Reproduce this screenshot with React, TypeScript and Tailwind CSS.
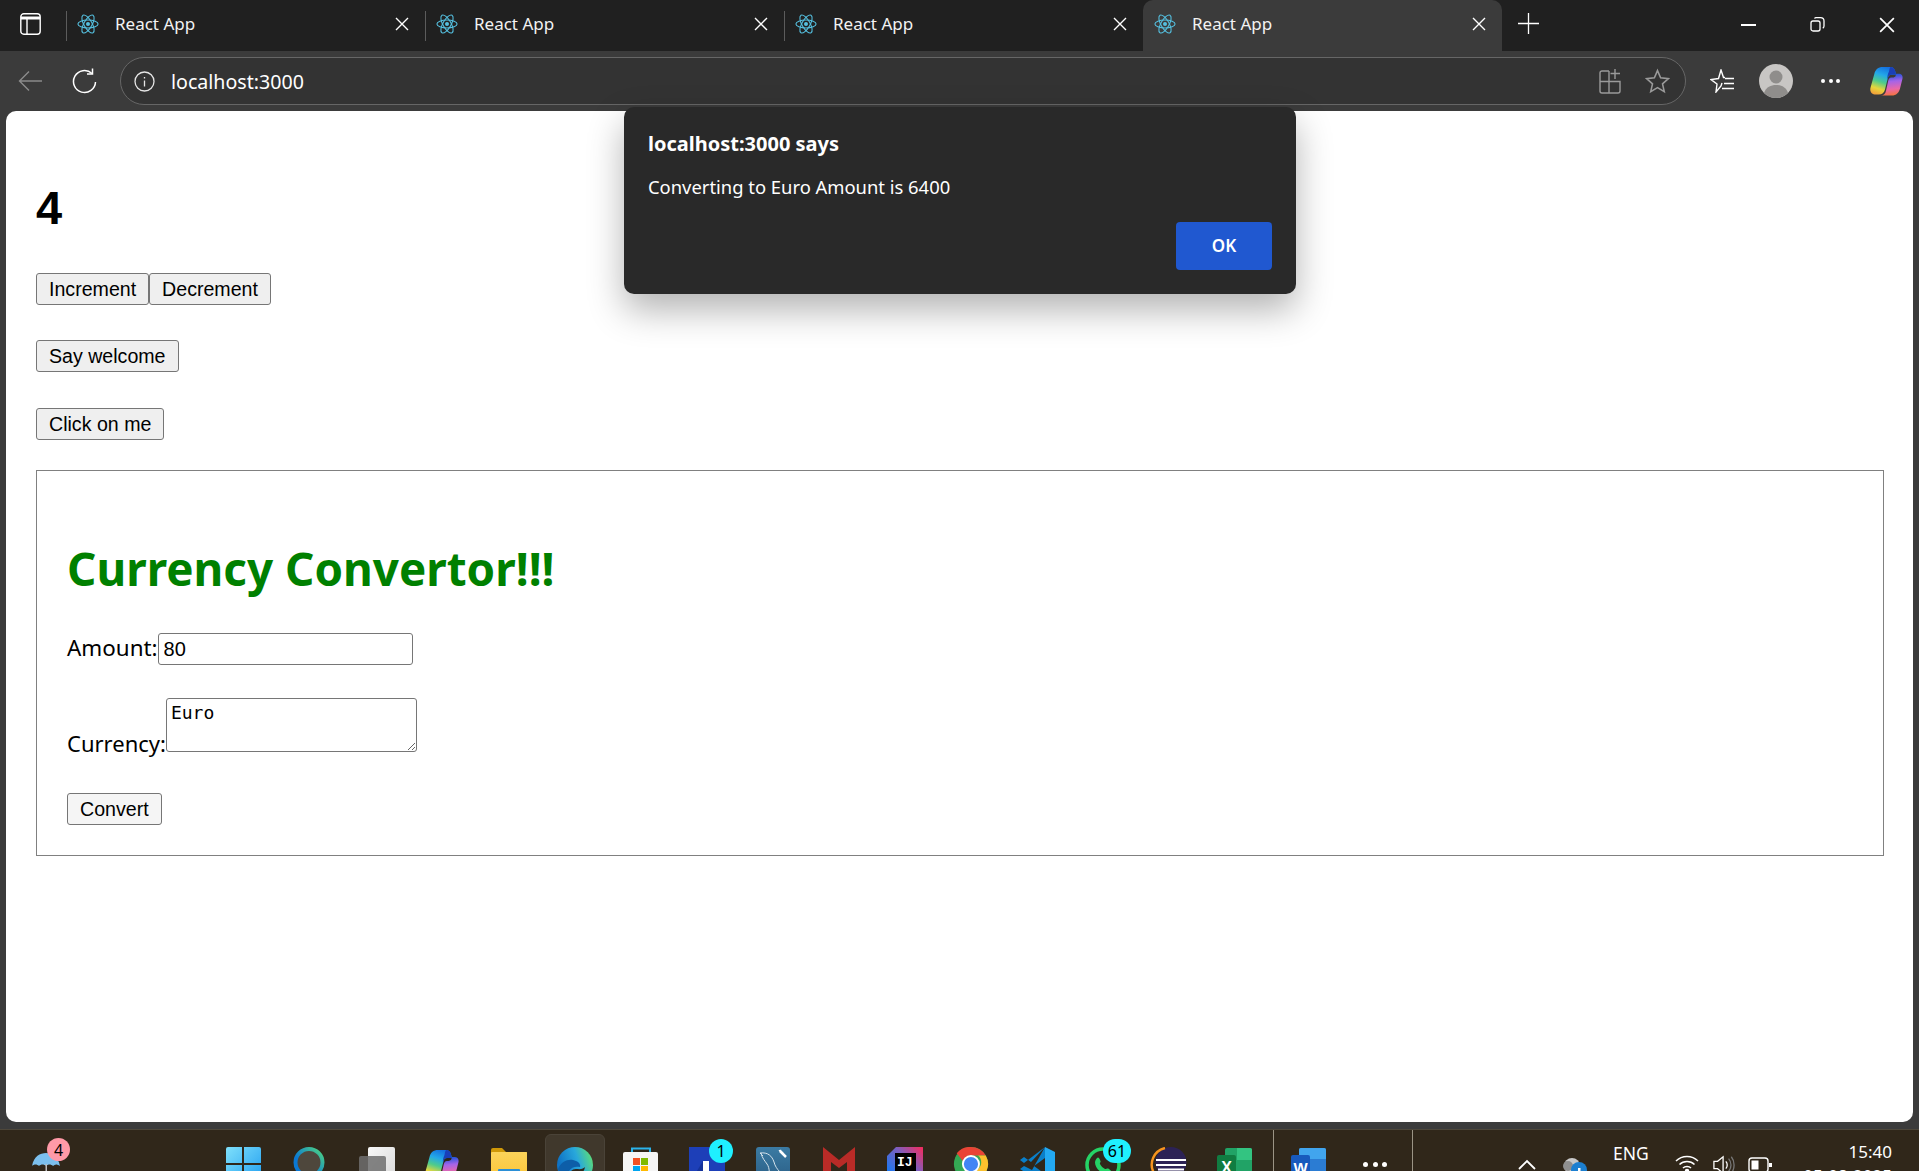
import React from "react";

const ui = { fontFamily: '"Noto Sans", "Open Sans", sans-serif' };
const arial = { fontFamily: '"Liberation Sans", Arial, sans-serif' };

function Atom() {
  return (
    <svg width="22" height="24" viewBox="-12 -12 24 24" fill="none" stroke="#55c0e0" strokeWidth="1.2">
      <circle r="2.2" fill="#55c0e0" stroke="none" />
      <ellipse rx="11" ry="4.4" />
      <ellipse rx="11" ry="4.4" transform="rotate(60)" />
      <ellipse rx="11" ry="4.4" transform="rotate(120)" />
    </svg>
  );
}

function X({ s = 14, w = 1.4 }: { s?: number; w?: number }) {
  return (
    <svg width={s} height={s} viewBox="0 0 14 14" stroke="#fff" strokeWidth={w} fill="none">
      <path d="M1 1l12 12M13 1L1 13" />
    </svg>
  );
}

function Tab({ active }: { active?: boolean }) {
  return (
    <div className={active ? "relative flex h-[51px] w-[359px] items-center rounded-t-[10px] bg-[#3b3b3b] pb-[3px]" : "relative flex h-[51px] w-[359px] items-center pb-[3px]"}>
      {!active && <div className="absolute left-0 top-[11px] h-[30px] w-px bg-[#5c5c5c]" />}
      <div className="ml-[11px] flex w-[22px] justify-center"><Atom /></div>
      <span className="ml-[16px] text-[17px] text-[#f2f2f2]" style={ui}>React App</span>
      <div className="ml-auto mr-[16px]"><X /></div>
    </div>
  );
}

function CopilotLogo({ s = 33 }: { s?: number }) {
  return (
    <svg width={s} height={s} viewBox="0 0 34 32">
      <defs>
        <linearGradient id="cpa" x1="0.6" y1="0" x2="0.3" y2="1">
          <stop offset="0" stopColor="#1470e0" />
          <stop offset="0.3" stopColor="#23a8e8" />
          <stop offset="0.55" stopColor="#4ecb8c" />
          <stop offset="0.8" stopColor="#e6d63c" />
          <stop offset="1" stopColor="#f2a33a" />
        </linearGradient>
        <linearGradient id="cpb" x1="0.45" y1="0" x2="0.55" y2="1">
          <stop offset="0" stopColor="#1452d8" />
          <stop offset="0.35" stopColor="#a564e8" />
          <stop offset="0.7" stopColor="#ea68a8" />
          <stop offset="1" stopColor="#f5743c" />
        </linearGradient>
      </defs>
      <path d="M22 12c2 0 3-.5 4-1l1-3h2.500c3 0 4.500 2 4 5l-2.500 10c-1 4.500-4 7.500-8.500 7.500H11c3 0 5-2 5.500-5l2-9c.3-2.500 1.500-4.500 3.500-4.500z" fill="url(#cpb)" />
      <path d="M13 1h8c3 0 4.500 2 5 4.500l1 3.500h-5c-2 0-3 1-3.500 3l-3 12c-.8 3.500-3 5.500-6.500 5.500H6c-4 0-6.500-3-5.500-7L4.500 8C5.500 3.500 8.500 1 13 1z" fill="url(#cpa)" />
      <path d="M21 1c2.500 0 4.500 1.500 5 4.500l1 3.500h-5c-2 0-3 1-3.500 3l-.5 2c-.5-3 .5-6 1.500-8 .5-2 .5-4 1.500-5z" fill="#1a3fb8" />
    </svg>
  );
}

function Avatar() {
  return (
    <svg width="34" height="34" viewBox="0 0 34 34">
      <circle cx="17" cy="17" r="17" fill="#c8c6c4" />
      <circle cx="17" cy="13" r="6.500" fill="#8f8d8b" />
      <path d="M5 29c2-6 7-8 12-8s10 2 12 8c-3 3-7 5-12 5s-9-2-12-5z" fill="#8f8d8b" />
    </svg>
  );
}

function TabBar() {
  return (
    <div className="flex h-[51px] shrink-0 items-center bg-[#202020]">
      <div className="mb-[4px] ml-[20px] w-[46px] shrink-0">
        <svg width="21" height="22" viewBox="0 0 21 22" fill="none" stroke="#fff" strokeWidth="1.4" className="block">
          <rect x="0.800" y="0.800" width="19.400" height="20.400" rx="3" />
          <path d="M1 5h19" strokeWidth="3" />
          <path d="M7 6v15" />
        </svg>
      </div>
      <Tab />
      <Tab />
      <Tab />
      <Tab active />
      <div className="mb-[4px] ml-[16px]">
        <svg width="21" height="21" viewBox="0 0 21 21" stroke="#fff" strokeWidth="1.300" className="block"><path d="M10.500 0v21M0 10.500h21" /></svg>
      </div>
      <div className="mb-[2px] ml-[202px] h-[2px] w-[15px] bg-white" />
      <div className="mb-[2px] ml-[54px]">
        <svg width="15" height="15" viewBox="0 0 15 15" fill="none" stroke="#fff" strokeWidth="1.300" className="block">
          <rect x="1" y="4" width="9" height="10" rx="2" />
          <path d="M4.500 1.500c.4-.6 1-.8 1.500-.8h4.500C12.500.7 14 2 14 4v5c0 1-.5 1.800-1.200 2.300" />
        </svg>
      </div>
      <div className="mb-[2px] ml-[54px]"><X s={16} w={1.500} /></div>
    </div>
  );
}

function Toolbar() {
  return (
    <div className="flex h-[60px] shrink-0 items-center bg-[#3b3b3b]">
      <div className="ml-[18px]">
        <svg width="25" height="22" viewBox="0 0 25 22" fill="none" stroke="#8b8b8b" strokeWidth="1.400" className="block"><path d="M24 11H1.500M11 1.500L1.500 11l9.500 9.500" /></svg>
      </div>
      <div className="ml-[29px]">
        <svg width="25" height="26" viewBox="0 0 25 26" fill="none" stroke="#fff" strokeWidth="1.500" className="block">
          <path d="M20 5.500A11 11 0 1 0 23.500 14" />
          <path d="M20.500 0.500v5.500H15" />
        </svg>
      </div>
      <div className="ml-[23px] flex h-[48px] w-[1566px] items-center rounded-[24px] border border-[#666666] bg-[#333333]">
        <div className="ml-[13px]">
          <svg width="21" height="21" viewBox="0 0 21 21" fill="none" stroke="#e6e6e6" strokeWidth="1.300" className="block">
            <circle cx="10.500" cy="10.500" r="9.500" />
            <path d="M10.500 9.500v6M10.500 6v1.400" />
          </svg>
        </div>
        <span className="ml-[16px] mt-[2px] text-[19.6px] text-white" style={ui}>localhost:3000</span>
        <div className="ml-auto">
          <svg width="22" height="26" viewBox="0 0 22 26" fill="none" stroke="#9a9a9a" strokeWidth="1.400" className="block">
            <path d="M10 3H3a2 2 0 0 0-2 2v18a2 2 0 0 0 2 2h16a2 2 0 0 0 2-2V13.500H1M10 3v22M16 1v10M11.500 5.500h9.500" />
          </svg>
        </div>
        <div className="ml-[24px] mr-[15px]">
          <svg width="25" height="26" viewBox="0 0 24 24" fill="none" stroke="#9a9a9a" strokeWidth="1.500" className="block"><path d="M12 2l3 7 7.500.7-5.700 5 1.700 7.500L12 18.300l-6.500 3.900 1.700-7.500-5.700-5L9 9z" /></svg>
        </div>
      </div>
      <div className="ml-[24px]">
        <svg width="24" height="24" viewBox="0 0 24 24" fill="none" stroke="#fff" strokeWidth="1.400" className="block">
          <path d="M12 14l-1 3-5 6 1-8-6-4.500 7.500-1L11 1l2.500 7.500H15" />
          <path d="M15 9.500h9M14 14.500h10M12 19.500h12" />
        </svg>
      </div>
      <div className="ml-[25px]"><Avatar /></div>
      <div className="ml-[28px] flex w-[19px] justify-between">
        <div className="h-[4px] w-[4px] rounded-full bg-white" />
        <div className="h-[4px] w-[4px] rounded-full bg-white" />
        <div className="h-[4px] w-[4px] rounded-full bg-white" />
      </div>
      <div className="ml-[30px]"><CopilotLogo /></div>
    </div>
  );
}

const btn = "rounded-[3px] border border-[#767676] bg-[#efefef] px-[12px] h-[32px] text-[19.6px] leading-[24px] text-black";

function Page() {
  return (
    <div className="mx-[6px] flex-1 overflow-hidden rounded-[10px] bg-white pl-[30px] pr-[29px] text-black" style={arial}>
      <h1 className="mt-[75px] h-[44px] text-[47px] font-bold leading-[44px]">4</h1>
      <div className="mt-[43px] flex h-[32px]">
        <button className={btn + " w-[113px]"} style={arial}>Increment</button>
        <button className={btn + " w-[122px]"} style={arial}>Decrement</button>
      </div>
      <div className="mt-[35px] flex h-[32px]">
        <button className={btn} style={arial}>Say welcome</button>
      </div>
      <div className="mt-[36px] flex h-[32px]">
        <button className={btn} style={arial}>Click on me</button>
      </div>
      <div className="mt-[30px] h-[386px] border border-[#808080] pl-[30px]" style={ui}>
        <h2 className="mt-[65px] h-[64px] text-[45.8px] font-bold leading-[64px] text-[#008000]" style={ui}>Currency Convertor!!!</h2>
        <div className="mt-[32px] h-[32px] text-[22.4px] leading-[32px]">
          Amount:<input readOnly value="80" className="h-[32px] w-[255px] rounded-[3px] border border-[#767676] px-[5px] text-[20px] outline-none" style={arial} />
        </div>
        <div className="mt-[34px] h-[53px] whitespace-nowrap text-[22px] leading-[32px]">
          Currency:<textarea readOnly value="Euro" className="m-0 h-[54px] w-[251px] resize rounded-[3px] border border-[#767676] px-[4px] py-[3px] text-[18px] leading-[22px] outline-none" style={{ fontFamily: '"DejaVu Sans Mono", monospace' }} />
        </div>
        <div className="mt-[42px]">
          <button className={btn + " bg-[#f5f5f5]"} style={arial}>Convert</button>
        </div>
      </div>
    </div>
  );
}

function Dialog() {
  return (
    <div className="absolute left-[624px] top-[107px] h-[187px] w-[672px] rounded-[10px] bg-[#292929] px-[24px] text-white shadow-[0_16px_36px_rgba(0,0,0,0.3)]" style={ui}>
      <div className="mt-[22px] text-[20px] font-bold leading-[30px]">localhost:3000 says</div>
      <div className="mt-[13px] text-[18.4px] leading-[30px]">Converting to Euro Amount is 6400</div>
      <div className="mt-[20px] flex justify-end">
        <button className="h-[48px] w-[96px] rounded-[4px] bg-[#2058d0] text-[17px] font-semibold text-white" style={ui}>OK</button>
      </div>
    </div>
  );
}

function Badge({ n, cls }: { n: string; cls: string }) {
  return <div className={"absolute flex h-[24px] items-center justify-center rounded-full text-[16px] text-black " + cls} style={ui}>{n}</div>;
}

const Slot = ({ children }: { children: React.ReactNode }) => (
  <div className="relative h-[36px] w-[36px] shrink-0">{children}</div>
);

function Windows() {
  return (
    <svg width="36" height="36" viewBox="0 0 36 36" className="block">
      <defs><linearGradient id="win" x1="0" y1="0" x2="1" y2="1"><stop offset="0" stopColor="#7fe0fb" /><stop offset="1" stopColor="#1e9cf0" /></linearGradient></defs>
      <path d="M1 2a2 2 0 0 1 2-2h14v16H1zM19 0h15a2 2 0 0 1 2 2v14H19zM1 18h16v18H1zM19 18h17v18H19z" fill="url(#win)" />
    </svg>
  );
}
function Cortana() {
  return (
    <svg width="36" height="36" viewBox="0 0 36 36" className="block">
      <defs><linearGradient id="cort" x1="0" y1="1" x2="1" y2="0"><stop offset="0.35" stopColor="#0a78d4" /><stop offset="1" stopColor="#4fd67f" /></linearGradient></defs>
      <circle cx="18" cy="15.500" r="13.500" fill="#4e473c" stroke="url(#cort)" strokeWidth="4" />
    </svg>
  );
}
function TaskView() {
  return (
    <svg width="40" height="36" viewBox="0 0 40 36" className="block">
      <defs>
        <linearGradient id="tv" x1="0" y1="0" x2="1" y2="1"><stop offset="0" stopColor="#f8f8f8" /><stop offset="1" stopColor="#d8d8d8" /></linearGradient>
      </defs>
      <rect x="11" y="0" width="27" height="36" rx="2" fill="url(#tv)" />
      <rect x="2" y="9" width="27" height="30" rx="2" fill="#6e6e6e" fillOpacity="0.85" />
    </svg>
  );
}
function Folder() {
  return (
    <svg width="38" height="36" viewBox="0 0 38 36" className="block">
      <defs><linearGradient id="fold" x1="0" y1="0" x2="0" y2="1"><stop offset="0" stopColor="#fbd35a" /><stop offset="1" stopColor="#fcc22e" /></linearGradient></defs>
      <path d="M2 3a2 2 0 0 1 2-2h9l4 4h21v6H2z" fill="#cf9808" />
      <rect x="2" y="5" width="36" height="34" rx="1" fill="url(#fold)" />
      <rect x="9" y="22" width="22" height="14" rx="1" fill="#2b8fd6" />
    </svg>
  );
}
function Edge() {
  return (
    <svg width="38" height="36" viewBox="0 0 38 36" className="block">
      <defs>
        <linearGradient id="edg" x1="0.1" y1="0.6" x2="1" y2="0.3"><stop offset="0" stopColor="#0e72c4" /><stop offset="0.55" stopColor="#28a7dc" /><stop offset="1" stopColor="#5cdd78" /></linearGradient>
      </defs>
      <circle cx="20" cy="18" r="18" fill="url(#edg)" />
      <path d="M3 22c3-7 9-10 15-9 5 1 8 4 7 7-4-1-9 0-11 4-1 3-1 7 1 10C8 33 4 28 3 22z" fill="#0d5ea8" />
      <path d="M15 26c1-3 4-4.500 7-4 4 .5 7-.5 8-2-1 5-4 8-8 9 1 2 3 4 5 5l-8 2c-3-3-5-6-4-10z" fill="#30271a" />
    </svg>
  );
}
function Store() {
  return (
    <svg width="38" height="36" viewBox="0 0 38 36" className="block">
      <path d="M11 5V1.500h18V5" fill="none" stroke="#2bb3ea" strokeWidth="2" />
      <rect x="2" y="5" width="35" height="32" rx="2" fill="#f5f5f5" />
      <rect x="12" y="11" width="7" height="7" fill="#f25022" />
      <rect x="20" y="11" width="7" height="7" fill="#7fba00" />
      <rect x="12" y="19" width="7" height="7" fill="#00a4ef" />
      <rect x="20" y="19" width="7" height="7" fill="#ffb900" />
    </svg>
  );
}
function Learn() {
  return (
    <svg width="38" height="36" viewBox="0 0 38 36" className="block">
      <rect x="2" y="-1" width="36" height="38" fill="#1d3fb8" />
      <path d="M16 14h6v18h10v5H16z" fill="#fff" />
      <path d="M2 37L16 14v23z" fill="#15329a" />
    </svg>
  );
}
function Workbench() {
  return (
    <svg width="38" height="36" viewBox="0 0 38 36" className="block">
      <defs><linearGradient id="wb" x1="0" y1="0" x2="0" y2="1"><stop offset="0" stopColor="#3b7ba3" /><stop offset="1" stopColor="#2a5d85" /></linearGradient></defs>
      <rect x="3" width="34" height="36" rx="3" fill="url(#wb)" />
      <path d="M7 6c8-1 12 3 14 9 1 4 3 7 6 10M8 6c1 5 4 8 6 11 3 4 2 10 3 15M7 6l3 3" fill="none" stroke="#d5e3ec" strokeWidth="1" />
      <path d="M27 4l6 6" stroke="#fff" strokeWidth="2.500" fill="none" />
      <path d="M25.500 3.500c1-1 2-1 3-.5l-1.500 2 1 1 2-1.500c.5 1 0 2-.5 3" fill="#fff" />
    </svg>
  );
}
function Gmail() {
  return (
    <svg width="38" height="36" viewBox="0 0 38 36" className="block">
      <path d="M4 0l16 13L36 0v36h-8V15l-8 6-8-6v21H4z" fill="#b92b27" />
    </svg>
  );
}
function Idea() {
  return (
    <svg width="38" height="36" viewBox="0 0 38 36" className="block">
      <defs><linearGradient id="ij" x1="0" y1="1" x2="1" y2="0"><stop offset="0.1" stopColor="#087cfa" /><stop offset="0.6" stopColor="#7b5fc0" /><stop offset="1" stopColor="#fe2857" /></linearGradient></defs>
      <path d="M12 -1h24a2 2 0 0 1 2 2v36H2V9z" fill="url(#ij)" />
      <rect x="10" y="6" width="21" height="32" fill="#000" />
    </svg>
  );
}
function Chrome() {
  return (
    <svg width="38" height="36" viewBox="0 0 38 38" className="block">
      <circle cx="20" cy="18" r="18" fill="#34a853" />
      <path d="M20 0a18 18 0 0 1 15.600 9H20a9 9 0 0 0-8.500 6L5 6.500A18 18 0 0 1 20 0z" fill="#ea4335" />
      <path d="M35.600 9A18 18 0 0 1 20 36l7.500-13a9 9 0 0 0 0-14z" fill="#fbc02d" />
      <circle cx="20" cy="18" r="9.500" fill="#fff" />
      <circle cx="20" cy="18" r="7.500" fill="#4285f4" />
    </svg>
  );
}
function VSCode() {
  return (
    <svg width="38" height="38" viewBox="0 0 38 38" className="block">
      <path d="M28 0l10 5v28l-10 5z" fill="#23a9f2" />
      <path d="M28 0v11L17 19l11 8v11L3 22l4-3 8 4L28 0z" fill="#0a7fc9" />
      <path d="M28 0L7 16l-4-3 4-3 7 5z" fill="#0a7fc9" />
    </svg>
  );
}
function WhatsApp() {
  return (
    <svg width="40" height="40" viewBox="0 0 40 40" className="block">
      <circle cx="20" cy="18" r="16" fill="none" stroke="#25d366" strokeWidth="3.500" />
      <path d="M14 11c2-2 3 2 3.500 3 .5 1-1 2-.5 3 1 2 3 4 5 5 1 .5 2-1 3-.5s4 2 3 4c-1 2-5 2-9 0-4-2-7-6-7-10 0-2 1-3 2-4.500z" fill="#25d366" />
    </svg>
  );
}
function Eclipse() {
  return (
    <svg width="40" height="36" viewBox="0 0 40 36" className="block">
      <circle cx="22" cy="15.500" r="15.500" fill="#2c2255" />
      <path d="M16 1A17 17 0 0 0 5 26" fill="none" stroke="#f7941e" strokeWidth="2.400" />
      <path d="M7 13h30M7 18h30M9 22.500h26" stroke="#ffffff" strokeWidth="2" />
    </svg>
  );
}
function Excel() {
  return (
    <div className="relative ml-[2px] h-[36px] w-[36px]">
      <div className="absolute left-[8px] top-[1px] h-[40px] w-[27px] rounded-[2px] bg-[#21a366]" />
      <div className="absolute left-[20px] top-[1px] h-[12px] w-[15px] rounded-tr-[2px] bg-[#33c481]" />
      <div className="absolute left-0 top-[8px] flex h-[28px] w-[19px] items-start justify-center rounded-[2px] bg-[#107c41] pt-[1px] text-[16px] font-bold leading-[24px] text-white" style={arial}>X</div>
    </div>
  );
}
function Word() {
  return (
    <div className="relative h-[36px] w-[36px]">
      <div className="absolute left-[8px] top-[1px] h-[40px] w-[27px] rounded-[2px] bg-[#2b7cd3]" />
      <div className="absolute left-[8px] top-[1px] h-[11px] w-[27px] rounded-t-[2px] bg-[#41a5ee]" />
      <div className="absolute left-0 top-[8px] flex h-[28px] w-[19px] items-start justify-center rounded-[2px] bg-[#185abd] pt-[1px] text-[15px] font-bold leading-[24px] text-white" style={arial}>W</div>
    </div>
  );
}

function Taskbar() {
  return (
    <div className="flex h-[42px] shrink-0 items-start overflow-hidden border-t border-[#4e473a] bg-[#30271a]" style={ui}>
      <div className="relative ml-[31px] mt-[14px] h-[30px] w-[30px] shrink-0">
        <svg width="30" height="30" viewBox="0 0 30 30" className="block">
          <path d="M1 22C3 12 9 9 15 9s12 3 14 13c-3-2-5-2-7 0-2-2-5-2-7 0-2-2-5-2-7 0-2-2-5-2-7 0z" fill="#7cc0ee" />
          <path d="M14.500 20h1.500v10h-1.500z" fill="#bdbdbd" />
        </svg>
      </div>
      <div className="absolute left-[47px] top-[1138px] flex h-[23px] w-[23px] items-center justify-center rounded-full bg-[#ff9aa8] text-[16px] text-black">4</div>
      <div className="relative ml-[164px] mt-[17px] flex shrink-0 gap-[30px] text-white">
        <div className="absolute left-[320px] top-[-13px] h-[60px] w-[60px] rounded-[6px] border border-[#4a4338] bg-[#40382c]" />
        <Slot><Windows /></Slot>
        <Slot><Cortana /></Slot>
        <Slot><TaskView /></Slot>
        <Slot><div className="ml-[2px] mt-[1px]"><CopilotLogo s={34} /></div></Slot>
        <Slot><Folder /></Slot>
        <Slot><Edge /></Slot>
        <Slot><Store /></Slot>
        <Slot>
          <Learn />
          <Badge n="1" cls="left-[22px] top-[-8px] w-[24px] bg-[#1ff0ff]" />
        </Slot>
        <Slot><Workbench /></Slot>
        <Slot><Gmail /></Slot>
        <Slot>
          <Idea />
          <span className="absolute left-[12px] top-[7px] text-[13px] font-bold leading-[18px] text-white" style={{ fontFamily: '"Liberation Mono", monospace' }}>IJ</span>
        </Slot>
        <Slot><Chrome /></Slot>
        <Slot><VSCode /></Slot>
        <Slot>
          <WhatsApp />
          <Badge n="61" cls="left-[20px] top-[-8px] w-[28px] bg-[#1ff0ff]" />
        </Slot>
        <Slot><Eclipse /></Slot>
        <Slot><Excel /></Slot>
      </div>
      <div className="ml-[22px] h-[42px] w-[1px] shrink-0 bg-[#9b9485]" />
      <div className="ml-[17px] mt-[17px] shrink-0"><Word /></div>
      <div className="ml-[36px] mt-[32px] flex w-[24px] shrink-0 justify-between">
        <div className="h-[5px] w-[5px] rounded-full bg-white" />
        <div className="h-[5px] w-[5px] rounded-full bg-white" />
        <div className="h-[5px] w-[5px] rounded-full bg-white" />
      </div>
      <div className="ml-[25px] h-[42px] w-[1px] shrink-0 bg-[#9b9485]" />
      <div className="ml-[105px] mt-[29px] shrink-0">
        <svg width="18" height="11" viewBox="0 0 18 11" fill="none" stroke="#fff" strokeWidth="1.800" className="block"><path d="M1 10l8-8 8 8" /></svg>
      </div>
      <div className="relative ml-[26px] mt-[27px] h-[20px] w-[26px] shrink-0">
        <svg width="26" height="20" viewBox="0 0 26 20" className="block"><circle cx="10" cy="9" r="8" fill="#c8c8c8" /><circle cx="6" cy="9" r="5" fill="#8f8f8f" /><circle cx="17" cy="13" r="8" fill="#1c7fd0" /><rect x="16" y="11" width="2.500" height="8" fill="#fff" /></svg>
      </div>
      <div className="ml-[25px] mt-[11px] w-[34px] shrink-0 text-center text-[17.5px] leading-[24px] text-white">
        <div>ENG</div>
        <div>IN</div>
      </div>
      <div className="ml-[28px] mt-[24px] shrink-0">
        <svg width="24" height="20" viewBox="0 0 24 20" fill="none" stroke="#fff" strokeWidth="1.500" className="block">
          <path d="M1 7c6-6 16-6 22 0M4.500 10.500c4-4 11-4 15 0M8 14c2-2 6-2 8 0" />
          <circle cx="12" cy="17" r="1.500" fill="#fff" />
        </svg>
      </div>
      <div className="ml-[14px] mt-[25px] shrink-0">
        <svg width="22" height="20" viewBox="0 0 24 20" fill="none" stroke="#fff" strokeWidth="1.400" className="block">
          <path d="M1 6h4l6-5v18l-6-5H1z" />
          <path d="M14 6c2 2 2 6 0 8" />
          <path d="M17 3c3.500 4 3.500 10 0 14M20 1c4 5 4 13 0 18" stroke="#777" />
        </svg>
      </div>
      <div className="ml-[13px] mt-[27px] shrink-0">
        <svg width="24" height="16" viewBox="0 0 24 16" fill="none" stroke="#fff" strokeWidth="1.400" className="block">
          <rect x="1" y="1" width="19" height="14" rx="3" />
          <rect x="3.500" y="3.500" width="7" height="9" fill="#fff" stroke="none" />
          <rect x="21" y="6" width="3" height="4" fill="#fff" stroke="none" />
        </svg>
      </div>
      <div className="ml-auto mr-[27px] mt-[10px] shrink-0 text-right text-[17px] leading-[24px] text-white">
        <div>15:40</div>
        <div>05-08-2025</div>
      </div>
    </div>
  );
}

export default function App() {
  return (
    <div className="relative flex h-[1171px] w-[1919px] flex-col overflow-hidden bg-[#3b3b3b]">
      <TabBar />
      <Toolbar />
      <Page />
      <div className="h-[7px] shrink-0" />
      <Taskbar />
      <Dialog />
    </div>
  );
}
